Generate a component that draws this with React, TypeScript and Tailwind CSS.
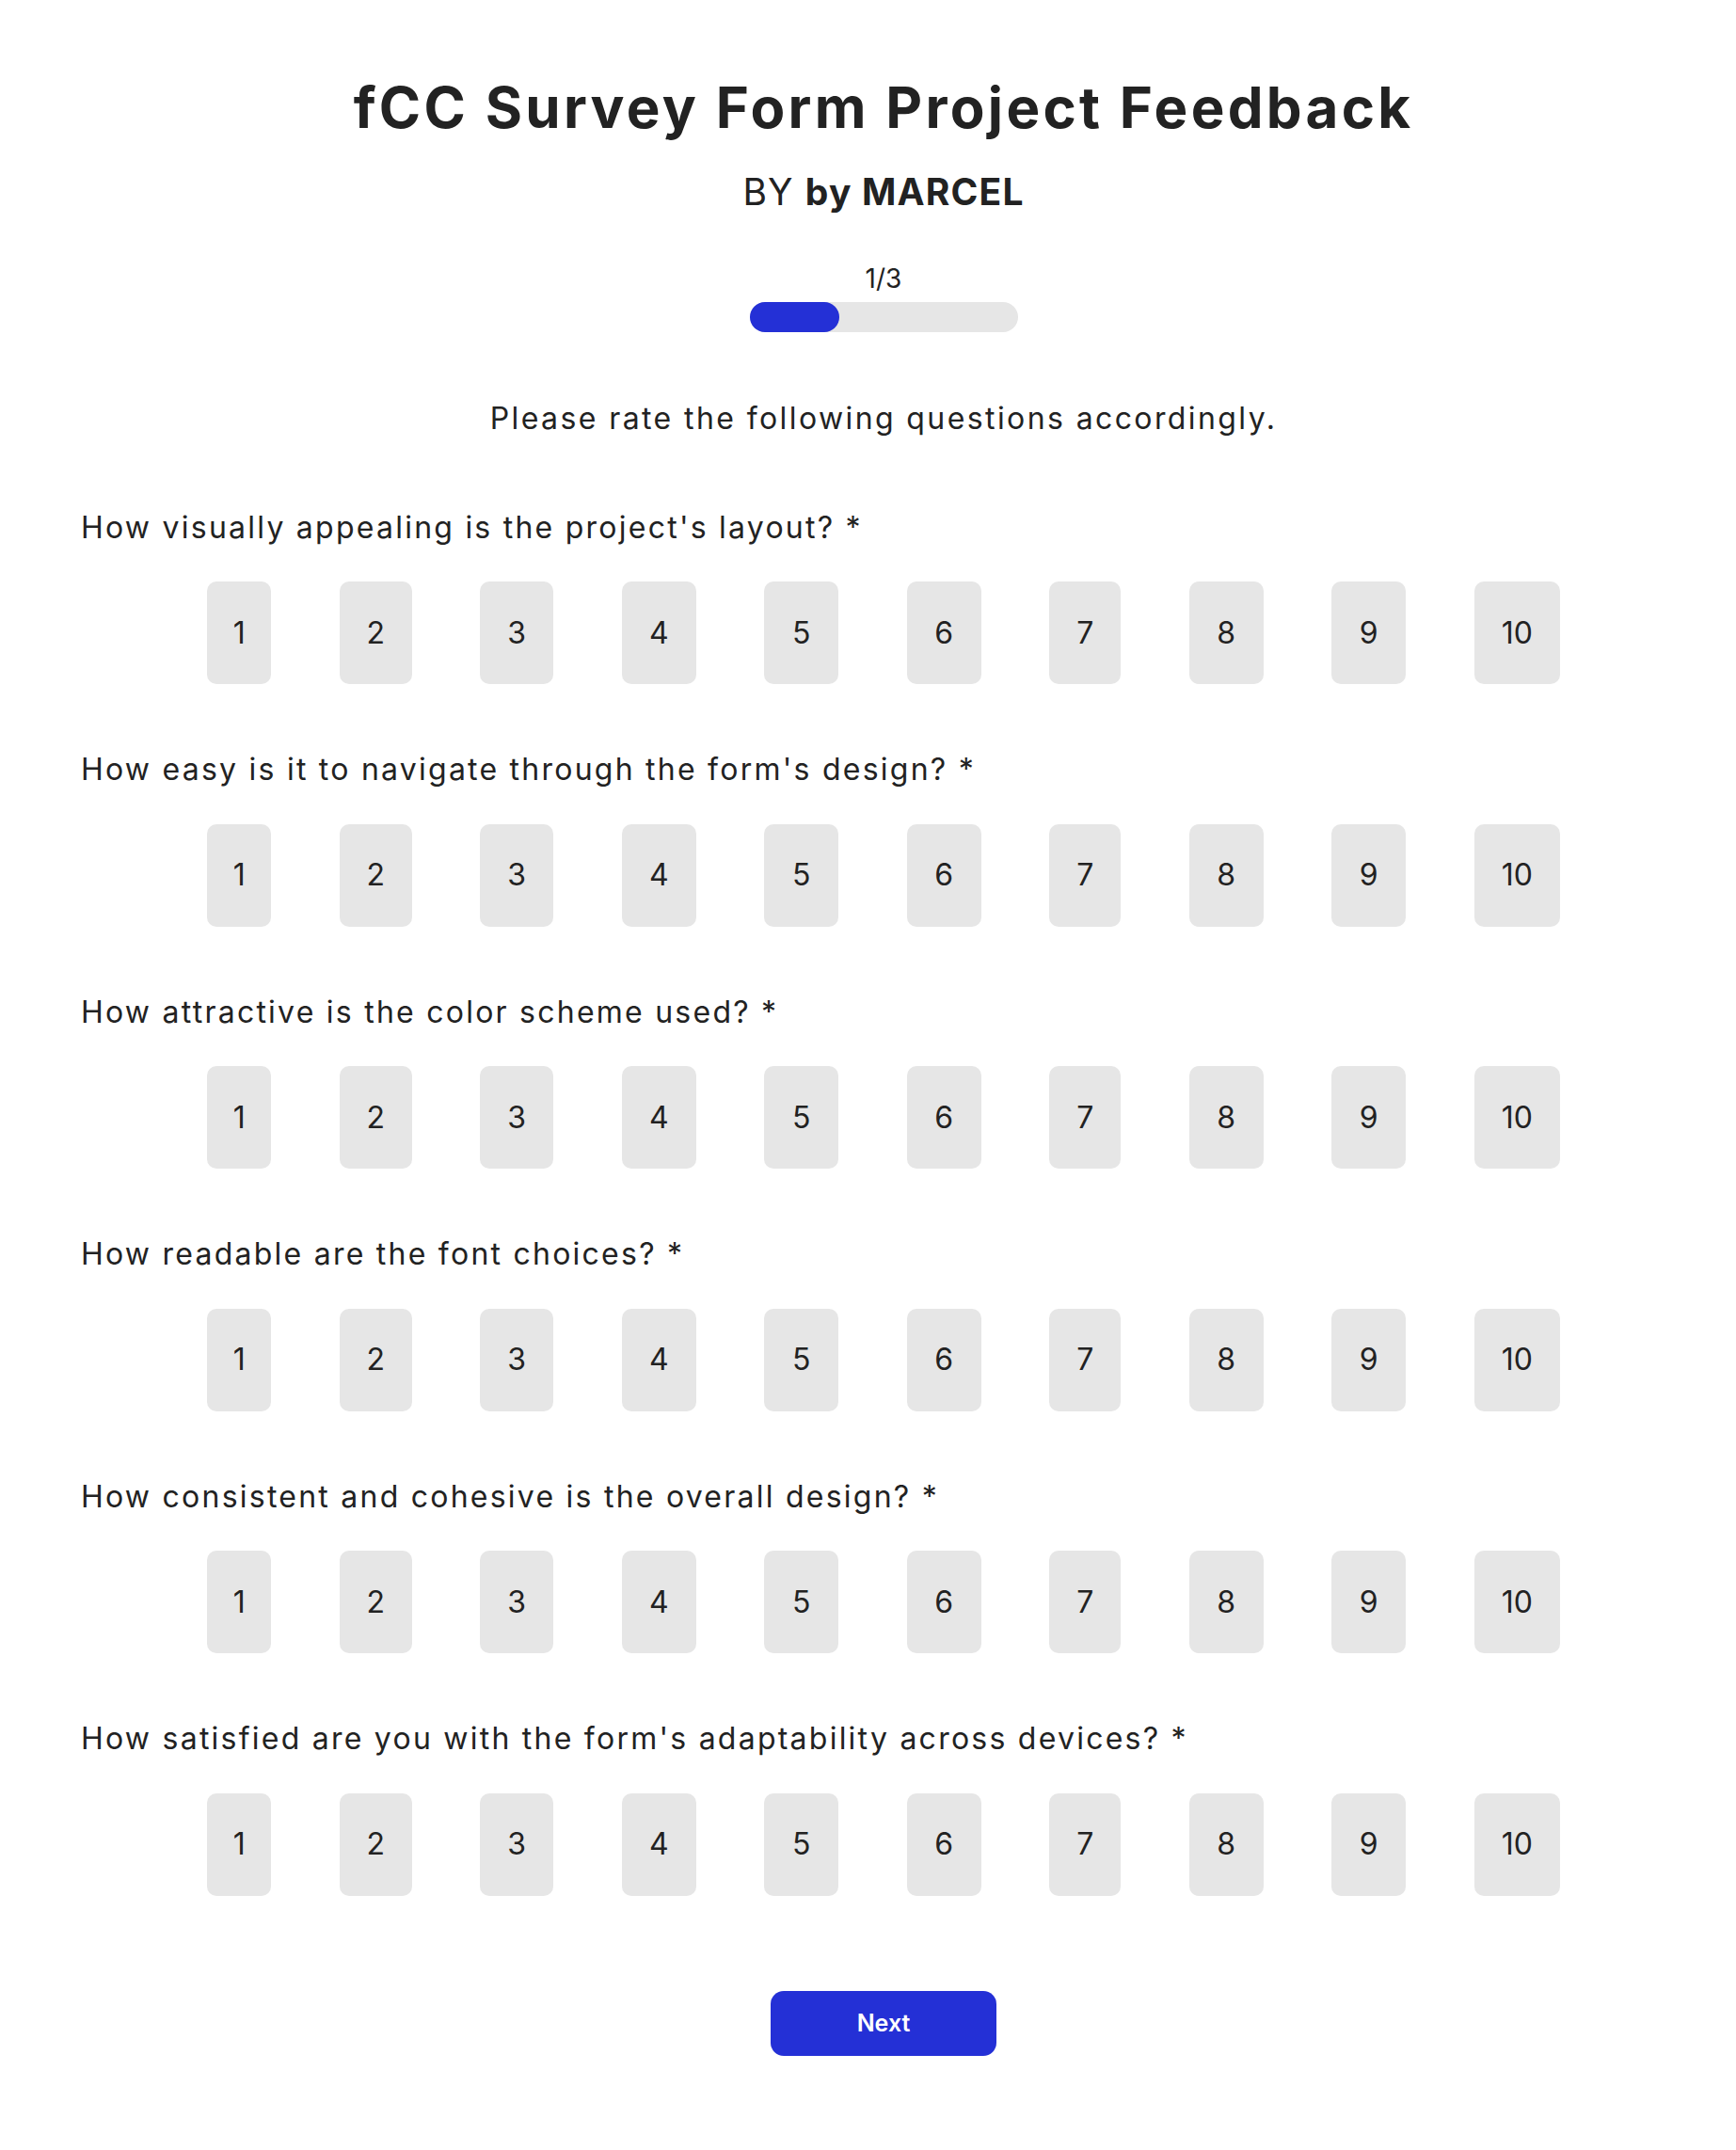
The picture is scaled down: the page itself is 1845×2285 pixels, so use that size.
import React from "react";

const questions: string[] = [
  "How visually appealing is the project's layout? *",
  "How easy is it to navigate through the form's design? *",
  "How attractive is the color scheme used? *",
  "How readable are the font choices? *",
  "How consistent and cohesive is the overall design? *",
  "How satisfied are you with the form's adaptability across devices? *",
];

const ratings = [
  { value: "1", w: "w-[68px]" },
  { value: "2", w: "w-[77px]" },
  { value: "3", w: "w-[78px]" },
  { value: "4", w: "w-[79px]" },
  { value: "5", w: "w-[79px]" },
  { value: "6", w: "w-[79px]" },
  { value: "7", w: "w-[76px]" },
  { value: "8", w: "w-[79px]" },
  { value: "9", w: "w-[79px]" },
  { value: "10", w: "w-[91px]" },
];

const RatingRow = () => {
  return (
    <div className="mt-[37.5px] flex flex-row justify-center gap-[72.5px]">
      {ratings.map((r) => (
        <button
          key={r.value}
          type="button"
          className={`${r.w} h-[109px] rounded-[10px] bg-[#e6e6e6] text-[32px] text-[#222] flex items-center justify-center`}
        >
          {r.value}
        </button>
      ))}
    </div>
  );
};

const App = () => {
  return (
    <div className="min-h-screen bg-white text-[#222] font-['Inter',sans-serif]">
      <div className="pl-[86px] pr-[53px] pt-[78px] pb-[100px] flex flex-col">
        <h1 className="text-center text-[60px] leading-[72px] font-bold tracking-[0.055em]">
          fCC Survey Form Project Feedback
        </h1>
        <div className="mt-[29.5px] text-center text-[39px] leading-[48px] tracking-[0.03em]">
          BY <span className="font-bold">by MARCEL</span>
        </div>

        <div className="mt-[51.5px] flex flex-col items-center">
          <div className="text-[28px] leading-[34px]">1/3</div>
          <div className="mt-[8px] w-[285px] h-[32px] rounded-full bg-[#e6e6e6]">
            <div className="w-[95px] h-full rounded-full bg-[#2430d6]" />
          </div>
        </div>

        <p className="mt-[72px] text-center text-[32px] leading-[40px] tracking-[0.075em]">
          Please rate the following questions accordingly.
        </p>

        <div className="mt-[75.5px] flex flex-col gap-[71px]">
          {questions.map((q) => (
            <div key={q} className="flex flex-col">
              <label className="text-[32px] leading-[40px] tracking-[0.07em]">{q}</label>
              <RatingRow />
            </div>
          ))}
        </div>

        <div className="mt-[101.5px] flex justify-center">
          <button
            type="button"
            className="w-[240px] h-[69px] rounded-[14px] bg-[#2430d6] text-white text-[25px] font-semibold"
          >
            Next
          </button>
        </div>
      </div>
    </div>
  );
};

export default App;
